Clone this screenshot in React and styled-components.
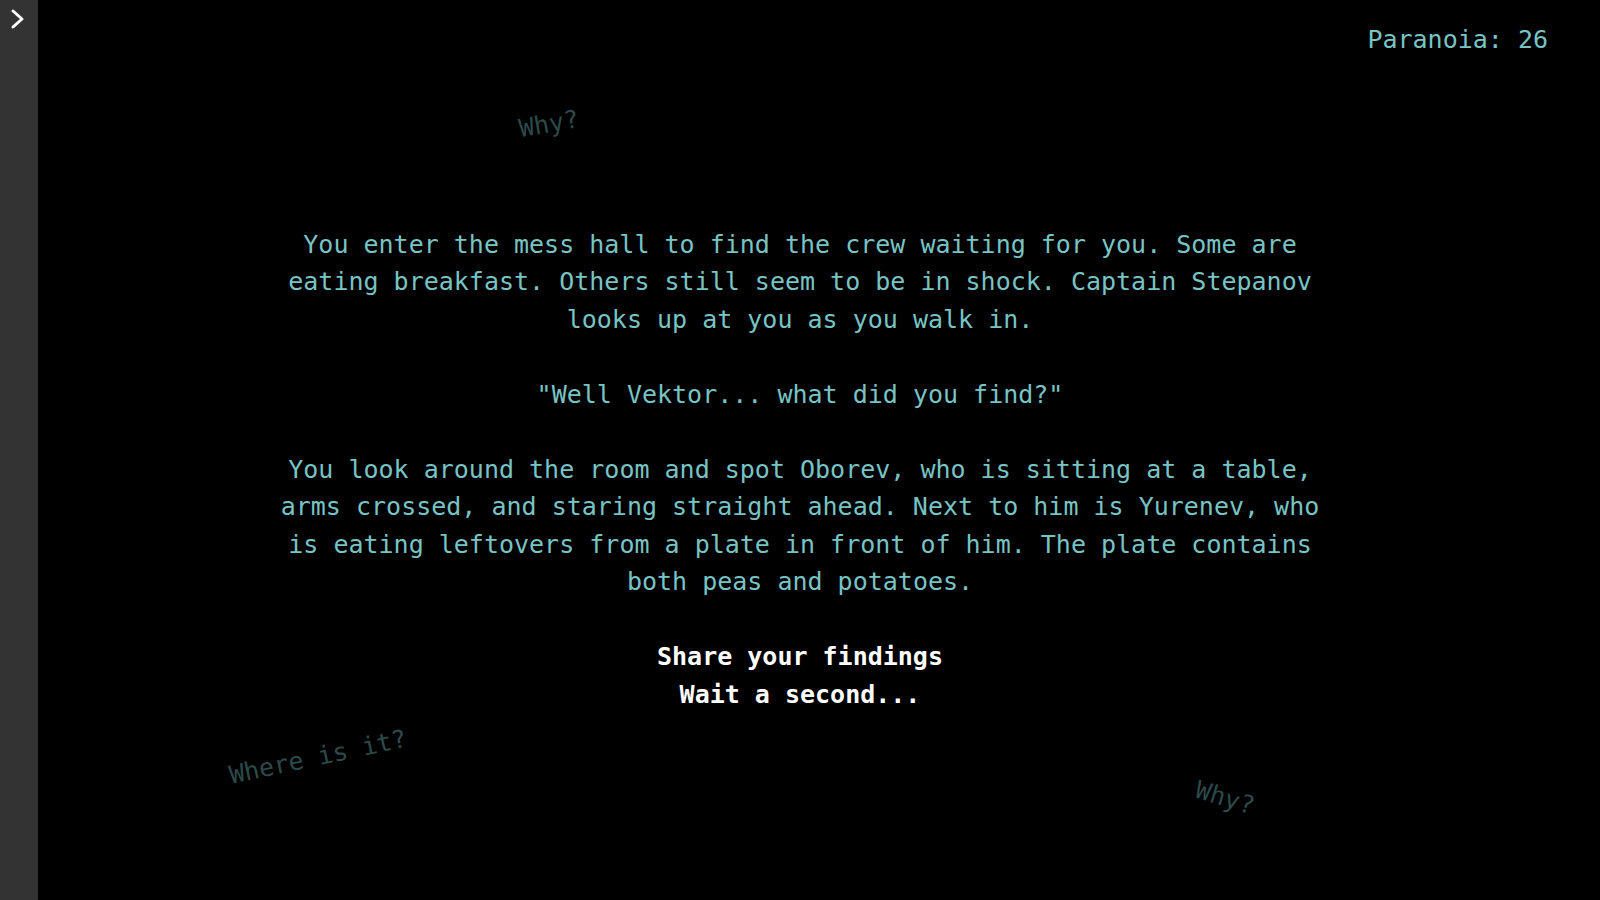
import React from "react";
import styled, { createGlobalStyle } from "styled-components";

const GlobalStyle = createGlobalStyle`
    html, body {
        margin: 0;
        padding: 0;
        background: #000;
        height: 100%;
        overflow: hidden;
    }
    #root {
        height: 100%;
    }
`

const thoughts = [
    { text: "Why?", x: 549, y: 124, angle: -10 },
    { text: "Where is it?", x: 318, y: 757, angle: -12 },
    { text: "Why?", x: 1225, y: 798, angle: 17 },
]

const story = [
    "You enter the mess hall to find the crew waiting for you. Some are eating breakfast. Others still seem to be in shock. Captain Stepanov looks up at you as you walk in.",
    "\"Well Vektor... what did you find?\"",
    "You look around the room and spot Oborev, who is sitting at a table, arms crossed, and staring straight ahead. Next to him is Yurenev, who is eating leftovers from a plate in front of him. The plate contains both peas and potatoes.",
]

const choices = ["Share your findings", "Wait a second..."]

const App = () => {
    return (
        <Screen>
            <GlobalStyle />
            <Drawer>
                <ToggleButton aria-label="Open menu">
                    <svg width="16" height="22" viewBox="0 0 16 22" fill="none">
                        <polyline
                            points="3,3 12,11 3,19"
                            stroke="#fff"
                            strokeWidth="3"
                            strokeLinecap="round"
                            strokeLinejoin="round"
                        />
                    </svg>
                </ToggleButton>
            </Drawer>
            <Stage>
                <Header>
                    <Paranoia>Paranoia: 26</Paranoia>
                </Header>
                <Story>
                    {story.map((p, i) => (
                        <Paragraph key={i}>{p}</Paragraph>
                    ))}
                    <Choices>
                        {choices.map((c) => (
                            <Choice key={c}>{c}</Choice>
                        ))}
                    </Choices>
                </Story>
                {thoughts.map((t, i) => (
                    <Thought
                        key={i}
                        style={{
                            left: t.x - 38,
                            top: t.y,
                            transform: `translate(-50%, -50%) rotate(${t.angle}deg)`,
                        }}
                    >
                        {t.text}
                    </Thought>
                ))}
            </Stage>
        </Screen>
    )
}

const Screen = styled.div`
    display: flex;
    height: 100vh;
    background: #000;
    font-family: "DejaVu Sans Mono", "Liberation Mono", monospace;
    font-size: 25px;
    line-height: 37.5px;
    color: #78c4c4;
`

const Drawer = styled.aside`
    width: 38px;
    flex-shrink: 0;
    background: #333333;
    display: flex;
    flex-direction: column;
    align-items: flex-start;
`

const ToggleButton = styled.button`
    background: none;
    border: none;
    padding: 8px 0 0 10px;
    cursor: pointer;
    display: flex;
`

const Stage = styled.main`
    position: relative;
    flex: 1;
    display: flex;
    flex-direction: column;
    padding-right: 38px;
`

const Header = styled.header`
    display: flex;
    justify-content: flex-end;
    padding: 21px 14px 0 0;
`

const Paranoia = styled.div`
    color: #78c4c4;
`

const Story = styled.section`
    width: 1046px;
    margin: 167px auto 0;
    text-align: center;
`

const Paragraph = styled.p`
    margin: 0 0 37.5px;
`

const Choices = styled.div`
    display: flex;
    flex-direction: column;
    align-items: center;
`

const Choice = styled.button`
    background: none;
    border: none;
    padding: 0;
    font: inherit;
    font-weight: bold;
    color: #fff;
    cursor: pointer;
`

const Thought = styled.span`
    position: absolute;
    white-space: nowrap;
    color: #2c4a4a;
    pointer-events: none;
`

export default App
